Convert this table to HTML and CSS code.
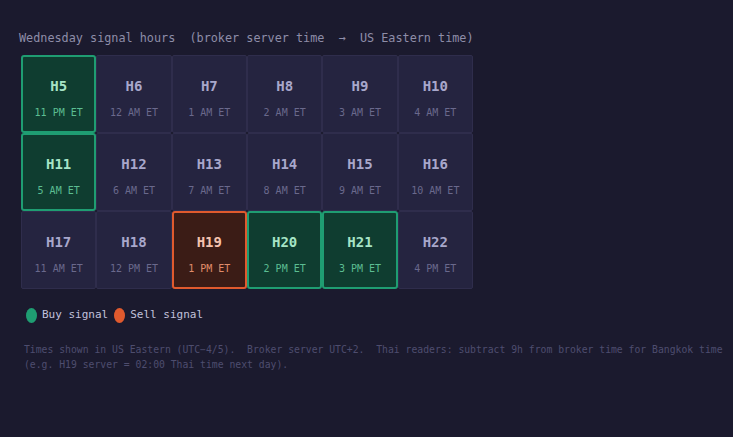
FILE: index.html
```html
<!DOCTYPE html>
<html lang="en">
<head>
    <meta charset="UTF-8">
    <title>Wednesday signal hours</title>
    <link rel="stylesheet" href="styles.css">
</head>
<body>
<div class="panel">
    <div class="title">Wednesday signal hours  (broker server time  →  US Eastern time)</div>

    <div class="hours">
        <div class="cell buy"><span class="h">H5</span><span class="et">11 PM ET</span></div>
        <div class="cell"><span class="h">H6</span><span class="et">12 AM ET</span></div>
        <div class="cell"><span class="h">H7</span><span class="et">1 AM ET</span></div>
        <div class="cell"><span class="h">H8</span><span class="et">2 AM ET</span></div>
        <div class="cell"><span class="h">H9</span><span class="et">3 AM ET</span></div>
        <div class="cell"><span class="h">H10</span><span class="et">4 AM ET</span></div>

        <div class="cell buy"><span class="h">H11</span><span class="et">5 AM ET</span></div>
        <div class="cell"><span class="h">H12</span><span class="et">6 AM ET</span></div>
        <div class="cell"><span class="h">H13</span><span class="et">7 AM ET</span></div>
        <div class="cell"><span class="h">H14</span><span class="et">8 AM ET</span></div>
        <div class="cell"><span class="h">H15</span><span class="et">9 AM ET</span></div>
        <div class="cell"><span class="h">H16</span><span class="et">10 AM ET</span></div>

        <div class="cell"><span class="h">H17</span><span class="et">11 AM ET</span></div>
        <div class="cell"><span class="h">H18</span><span class="et">12 PM ET</span></div>
        <div class="cell sell"><span class="h">H19</span><span class="et">1 PM ET</span></div>
        <div class="cell buy"><span class="h">H20</span><span class="et">2 PM ET</span></div>
        <div class="cell buy"><span class="h">H21</span><span class="et">3 PM ET</span></div>
        <div class="cell"><span class="h">H22</span><span class="et">4 PM ET</span></div>
    </div>

    <div class="legend">
        <span class="dot dot-buy"></span><span>Buy signal</span>
        <span class="dot dot-sell"></span><span>Sell signal</span>
    </div>

    <p class="note">Times shown in US Eastern (UTC−4/5).  Broker server UTC+2.  Thai readers: subtract 9h from broker time for Bangkok time<br>(e.g. H19 server = 02:00 Thai time next day).</p>
</div>
</body>
</html>
```

FILE: styles.css
```css
html, body {
    margin: 0;
    padding: 0;
    background: #1b1a2e;
}

body {
    font-family: "DejaVu Sans Mono", monospace;
    width: 733px;
    height: 437px;
    overflow: hidden;
}

.panel {
    padding: 31px 0 0 19px;
}

.title {
    font-size: 11.8px;
    line-height: 14px;
    color: #8e8da8;
    white-space: pre;
}

.hours {
    display: grid;
    grid-template-columns: repeat(6, 1fr);
    grid-auto-rows: 78px;
    width: 452px;
    margin: 10px 0 0 2px;
}

.cell {
    display: flex;
    flex-direction: column;
    align-items: center;
    padding-top: 21px;
    box-sizing: border-box;
    background: #252440;
    border: 1px solid #2f2d4c;
    border-radius: 2px;
}

.cell .h {
    font-size: 14px;
    font-weight: bold;
    line-height: 18px;
    color: #a8a7cb;
}

.cell .et {
    font-size: 10px;
    line-height: 12px;
    margin-top: 12px;
    color: #6a698c;
}

.cell.buy {
    background: #0f3d30;
    border: 2px solid #1f9d72;
    border-radius: 3px;
    padding-top: 20px;
}

.cell.buy .h {
    color: #a6e4c6;
}

.cell.buy .et {
    color: #5cbd92;
}

.cell.sell {
    background: #3b1c16;
    border: 2px solid #e05a2e;
    border-radius: 3px;
    padding-top: 20px;
}

.cell.sell .h {
    color: #f4c2ae;
}

.cell.sell .et {
    color: #e08c6a;
}

.legend {
    display: flex;
    align-items: center;
    margin: 18px 0 0 7px;
    font-size: 11px;
    line-height: 16px;
    color: #c2c1dc;
}

.dot {
    display: inline-block;
    width: 11px;
    height: 15px;
    border-radius: 50%;
    margin-right: 5px;
}

.dot-buy {
    background: #1f9d72;
}

.dot-sell {
    background: #e05a2e;
    margin-left: 6px;
}

.note {
    margin: 19px 0 0 5px;
    font-size: 9.76px;
    line-height: 15px;
    color: #4e4d6e;
    white-space: pre;
}
```
